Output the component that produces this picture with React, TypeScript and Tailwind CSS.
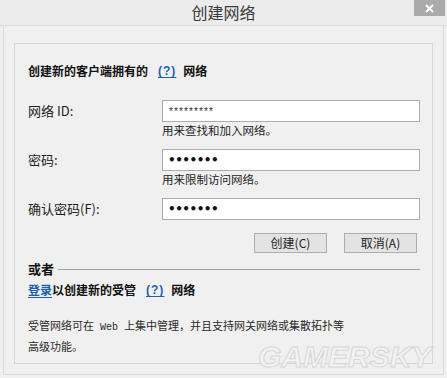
const Help = () => (
  <span className="ml-[8px] mr-[5px] px-[2px] text-[#1d5fae] underline underline-offset-2 font-['Liberation_Sans',sans-serif] font-bold tracking-[1px]">
    (?)
  </span>
);

const Field = ({
  label,
  value,
  hint,
  dots,
}: {
  label: string;
  value: string;
  hint?: string;
  dots?: boolean;
}) => (
  <div className="flex flex-col">
    <div className="flex items-center h-[22px]">
      <div className="w-[134px] text-[13px] leading-[22px] text-[#1e1e1e]">{label}</div>
      <div className="flex-1 h-[22px] bg-white border border-[#adadad] flex items-center pl-[5px]">
        {dots ? (
          <span className="text-[12px] leading-none tracking-[-0.5px] font-bold text-[#111] font-['DejaVu_Sans',sans-serif]">
            •••••••
          </span>
        ) : (
          <span className="text-[10px] leading-none tracking-[-1px] text-[#333] font-['Liberation_Mono',monospace] pt-[3px]">
            {value}
          </span>
        )}
      </div>
    </div>
    {hint && (
      <div className="pl-[134px] h-[16px] text-[11.5px] leading-[17px] text-[#1e1e1e]">{hint}</div>
    )}
  </div>
);

export default function App() {
  return (
    <div className="relative w-[447px] h-[378px] bg-[#f0f0f0] flex flex-col overflow-hidden font-['Noto_Sans_CJK_SC',sans-serif]">
      <div className="relative h-[26px] shrink-0 border-b border-[#d9d9d9] bg-[#ececec] flex items-center justify-center">
        <span className="text-[16px] leading-none text-[#3a3a3a] -mt-[2px]">创建网络</span>
        <div className="absolute right-[2px] top-0 w-[31px] h-[16px] bg-[#aaaaaa] flex items-center justify-center">
          <svg width="9" height="9" viewBox="0 0 9 9">
            <path d="M1 1 L8 8 M8 1 L1 8" stroke="white" strokeWidth="2" />
          </svg>
        </div>
      </div>

      <div className="flex-1 px-[3px] pb-[3px]">
        <div className="h-full border-x border-b border-[#dadada] pt-[17px] px-[10px] pb-[10px]">
          <div className="h-full border border-[#d6d6d6] pl-[13px] pr-[12px] pt-[19px] flex flex-col">
            <div className="text-[12px] leading-[16px] font-bold text-[#111] flex items-center">
              <span>创建新的客户端拥有的</span>
              <Help />
              <span>网络</span>
            </div>

            <div className="mt-[21px] flex flex-col gap-[11px]">
              <Field label="网络 ID:" value="*********" hint="用来查找和加入网络。" />
              <Field label="密码:" value="" dots hint="用来限制访问网络。" />
              <Field label="确认密码(F):" value="" dots />
            </div>

            <div className="mt-[13px] flex justify-end gap-[17px] pr-[3px]">
              <button className="w-[73px] h-[20px] bg-[#e3e3e3] border border-[#adadad] text-[12px] leading-none text-[#222]">
                创建(C)
              </button>
              <button className="w-[73px] h-[20px] bg-[#e3e3e3] border border-[#adadad] text-[12px] leading-none text-[#222]">
                取消(A)
              </button>
            </div>

            <div className="mt-[7px] flex items-center">
              <span className="text-[13px] leading-[18px] font-bold text-[#111]">或者</span>
              <div className="flex-1 ml-[4px] mt-[1px] h-px bg-[#a3a3a3]" />
            </div>

            <div className="mt-[4px] text-[12px] leading-[16px] font-bold text-[#111] flex items-center">
              <span className="text-[#1d5fae] underline underline-offset-2">登录</span>
              <span>以创建新的受管</span>
              <Help />
              <span>网络</span>
            </div>

            <div className="mt-[18px] text-[11px] leading-[18px] text-[#2a2a2a]">
              <div>
                受管网络可在<span className="font-['Liberation_Mono',monospace] text-[10px]"> Web </span>上集中管理，并且支持网关网络或集散拓扑等
              </div>
              <div>高级功能。</div>
            </div>
          </div>
        </div>
      </div>

      <div className="absolute left-[258px] top-[342px] text-[30px] leading-none font-bold italic font-['Liberation_Sans',sans-serif] text-[#f2f2f2] [-webkit-text-stroke:1px_#d6d6d6]">
        GAMERSKY
      </div>
    </div>
  );
}
